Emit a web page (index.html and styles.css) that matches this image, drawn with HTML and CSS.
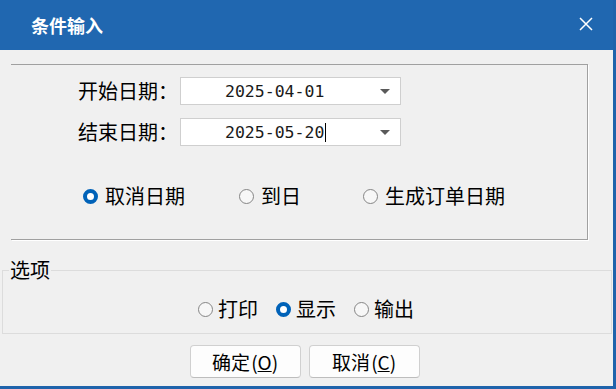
FILE: index.html
```html
<!DOCTYPE html>
<html lang="zh-CN">
<head>
    <meta charset="UTF-8">
    <title>条件输入</title>
    <link rel="stylesheet" href="styles.css">
</head>
<body>
    <div class="window">
        <div class="titlebar">
            <span class="title">条件输入</span>
            <svg class="close" width="14" height="14" viewBox="0 0 14 14">
                <path d="M1 1 L13 13 M13 1 L1 13" stroke="#ffffff" stroke-width="1.5" fill="none"/>
            </svg>
        </div>

        <div class="content">
            <div class="date-box">
                <div class="date-row">
                    <span class="date-label">开始日期：</span>
                    <div class="combo">
                        <span class="combo-text">2025-04-01</span>
                        <span class="combo-arrow"></span>
                    </div>
                </div>
                <div class="date-row">
                    <span class="date-label">结束日期：</span>
                    <div class="combo">
                        <span class="combo-text">2025-05-20<span class="caret"></span></span>
                        <span class="combo-arrow"></span>
                    </div>
                </div>

                <div class="date-radios">
                    <label class="radio"><span class="dot checked"></span>取消日期</label>
                    <label class="radio"><span class="dot"></span>到日</label>
                    <label class="radio"><span class="dot"></span>生成订单日期</label>
                </div>
            </div>

            <fieldset class="options">
                <legend>选项</legend>
                <div class="option-radios">
                    <label class="radio"><span class="dot"></span>打印</label>
                    <label class="radio"><span class="dot checked"></span>显示</label>
                    <label class="radio"><span class="dot"></span>输出</label>
                </div>
            </fieldset>

            <div class="buttons">
                <button class="btn">确定 (<u>O</u>)</button>
                <button class="btn">取消 (<u>C</u>)</button>
            </div>
        </div>
    </div>
</body>
</html>
```

FILE: styles.css
```css
body {
    margin: 0;
    width: 616px;
    height: 389px;
    overflow: hidden;
    background-color: #f0f0f0;
    font-family: "Noto Sans CJK SC", sans-serif;
    color: #000000;
}

.window {
    box-sizing: border-box;
    width: 616px;
    height: 389px;
    border-right: 3px solid #1f63ab;
    border-bottom: 3px solid #1f63ab;
}

.titlebar {
    height: 50px;
    background-color: #2067b0;
    display: flex;
    align-items: center;
    justify-content: space-between;
    padding: 0 20px 0 31px;
}

.title {
    color: #ffffff;
    font-size: 18px;
    font-weight: 700;
    line-height: 20px;
}

.close {
    display: block;
    margin-top: -2px;
}

.date-box {
    box-sizing: border-box;
    width: 577px;
    height: 176px;
    margin: 14px 0 0 11px;
    padding: 12px 0 0 67px;
    border: 1px solid #a0a0a0;
    border-left: none;
    box-shadow: 1px 1px 0 #ffffff;
}

.date-row {
    display: flex;
    align-items: center;
    margin-bottom: 13px;
}

.date-label {
    width: 102px;
    font-size: 20px;
    line-height: 28px;
}

.combo {
    box-sizing: border-box;
    width: 221px;
    height: 28px;
    background-color: #ffffff;
    border: 1px solid #cfcfcf;
    display: flex;
    align-items: center;
    justify-content: space-between;
    padding: 0 10px 0 44px;
}

.combo-text {
    font-family: "DejaVu Sans Mono", monospace;
    font-size: 16.5px;
    color: #1a1a1a;
    display: flex;
    align-items: center;
}

.caret {
    display: inline-block;
    width: 1px;
    height: 19px;
    background-color: #000000;
    margin-left: 1px;
}

.combo-arrow {
    width: 0;
    height: 0;
    border-left: 5px solid transparent;
    border-right: 5px solid transparent;
    border-top: 5px solid #5a5a5a;
}

.date-radios {
    display: grid;
    grid-template-columns: 156px 124px auto;
    margin: 40px 0 0 5px;
}

.radio {
    display: flex;
    align-items: center;
    gap: 7px;
    font-size: 20px;
    line-height: 20px;
}

.dot {
    box-sizing: border-box;
    width: 15px;
    height: 15px;
    border-radius: 50%;
    border: 1px solid #858585;
    background-color: #f7f7f7;
}

.dot.checked {
    border: 4px solid #0062b8;
    background-color: #ffffff;
}

.options {
    box-sizing: border-box;
    width: 610px;
    margin: 20px 0 0 2px;
    padding: 19px 0 14px 6px;
    border: 1px solid #dcdcdc;
    min-width: 0;
}

.options legend {
    font-size: 20px;
    line-height: 20px;
    padding: 0 1px;
}

.option-radios {
    display: flex;
    justify-content: center;
    gap: 18px;
    padding-right: 8px;
}

.option-radios .radio {
    gap: 5px;
}

.buttons {
    display: flex;
    justify-content: center;
    gap: 8px;
    margin-top: 11px;
    padding-right: 4px;
}

.btn {
    box-sizing: border-box;
    width: 111px;
    height: 33px;
    background-color: #fdfdfd;
    border: 1px solid #d0d0d0;
    border-bottom-color: #bdbdbd;
    border-radius: 4px;
    font-family: "Noto Sans CJK SC", sans-serif;
    font-size: 19px;
    line-height: 20px;
    color: #000000;
    padding: 0;
    word-spacing: -3px;
}
```
